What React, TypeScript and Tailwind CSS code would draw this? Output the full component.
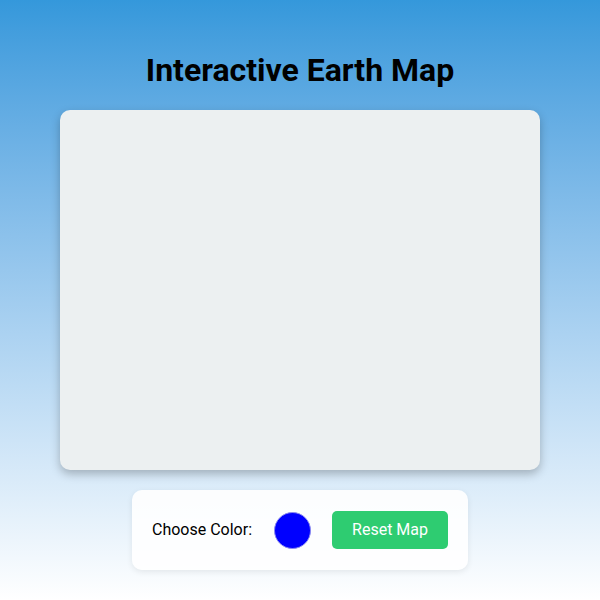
export default function App() {
  return (
    <div
      className="flex min-h-[600px] w-full flex-col items-center bg-gradient-to-b from-[#3498db] to-white pt-[52px]"
      style={{ fontFamily: 'Roboto, "Liberation Sans", sans-serif' }}
    >
      <h1 className="mb-[21px] text-[32px] font-bold leading-[37px] text-black">
        Interactive Earth Map
      </h1>

      <div className="h-[360px] w-[480px] rounded-[10px] bg-[#ecf0f1] shadow-[0_4px_10px_rgba(0,0,0,0.25)]" />

      <div className="mt-[20px] flex h-[80px] w-[336px] items-center rounded-[10px] bg-white/90 px-[20px] shadow-[0_2px_6px_rgba(0,0,0,0.08)]">
        <span className="shrink-0 whitespace-nowrap text-[16px] text-black">Choose Color:</span>
        <div className="ml-[22px] h-[37px] w-[37px] shrink-0 rounded-full border border-[#8a8af0] bg-[#0000ff]" />
        <button className="ml-[21px] h-[38px] w-[116px] shrink-0 rounded-[5px] bg-[#2ecc71] text-[16px] text-white">
          Reset Map
        </button>
      </div>
    </div>
  );
}
